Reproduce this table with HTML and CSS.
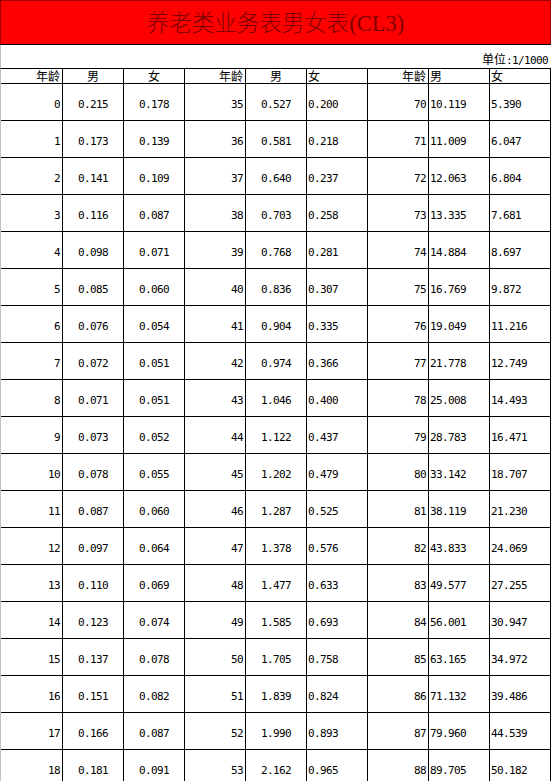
FILE: index.html
```html
<!DOCTYPE html>
<html lang="zh-CN">
<head>
<meta charset="utf-8">
<title>养老类业务表男女表(CL3)</title>
<link rel="stylesheet" href="styles.css">
</head>
<body>
<div class="sheet">
  <h1 class="title">养老类业务表男女表(CL3)</h1>
  <div class="unit">单位<span class="num">:1/1000</span></div>
  <div class="grid">
    <div class="c h">年龄</div><div class="c h">男</div><div class="c h">女</div><div class="c h">年龄</div><div class="c h">男</div><div class="c h">女</div><div class="c h">年龄</div><div class="c h">男</div><div class="c h">女</div>
    <div class="c">0</div><div class="c">0.215</div><div class="c">0.178</div><div class="c">35</div><div class="c">0.527</div><div class="c">0.200</div><div class="c">70</div><div class="c">10.119</div><div class="c">5.390</div>
    <div class="c">1</div><div class="c">0.173</div><div class="c">0.139</div><div class="c">36</div><div class="c">0.581</div><div class="c">0.218</div><div class="c">71</div><div class="c">11.009</div><div class="c">6.047</div>
    <div class="c">2</div><div class="c">0.141</div><div class="c">0.109</div><div class="c">37</div><div class="c">0.640</div><div class="c">0.237</div><div class="c">72</div><div class="c">12.063</div><div class="c">6.804</div>
    <div class="c">3</div><div class="c">0.116</div><div class="c">0.087</div><div class="c">38</div><div class="c">0.703</div><div class="c">0.258</div><div class="c">73</div><div class="c">13.335</div><div class="c">7.681</div>
    <div class="c">4</div><div class="c">0.098</div><div class="c">0.071</div><div class="c">39</div><div class="c">0.768</div><div class="c">0.281</div><div class="c">74</div><div class="c">14.884</div><div class="c">8.697</div>
    <div class="c">5</div><div class="c">0.085</div><div class="c">0.060</div><div class="c">40</div><div class="c">0.836</div><div class="c">0.307</div><div class="c">75</div><div class="c">16.769</div><div class="c">9.872</div>
    <div class="c">6</div><div class="c">0.076</div><div class="c">0.054</div><div class="c">41</div><div class="c">0.904</div><div class="c">0.335</div><div class="c">76</div><div class="c">19.049</div><div class="c">11.216</div>
    <div class="c">7</div><div class="c">0.072</div><div class="c">0.051</div><div class="c">42</div><div class="c">0.974</div><div class="c">0.366</div><div class="c">77</div><div class="c">21.778</div><div class="c">12.749</div>
    <div class="c">8</div><div class="c">0.071</div><div class="c">0.051</div><div class="c">43</div><div class="c">1.046</div><div class="c">0.400</div><div class="c">78</div><div class="c">25.008</div><div class="c">14.493</div>
    <div class="c">9</div><div class="c">0.073</div><div class="c">0.052</div><div class="c">44</div><div class="c">1.122</div><div class="c">0.437</div><div class="c">79</div><div class="c">28.783</div><div class="c">16.471</div>
    <div class="c">10</div><div class="c">0.078</div><div class="c">0.055</div><div class="c">45</div><div class="c">1.202</div><div class="c">0.479</div><div class="c">80</div><div class="c">33.142</div><div class="c">18.707</div>
    <div class="c">11</div><div class="c">0.087</div><div class="c">0.060</div><div class="c">46</div><div class="c">1.287</div><div class="c">0.525</div><div class="c">81</div><div class="c">38.119</div><div class="c">21.230</div>
    <div class="c">12</div><div class="c">0.097</div><div class="c">0.064</div><div class="c">47</div><div class="c">1.378</div><div class="c">0.576</div><div class="c">82</div><div class="c">43.833</div><div class="c">24.069</div>
    <div class="c">13</div><div class="c">0.110</div><div class="c">0.069</div><div class="c">48</div><div class="c">1.477</div><div class="c">0.633</div><div class="c">83</div><div class="c">49.577</div><div class="c">27.255</div>
    <div class="c">14</div><div class="c">0.123</div><div class="c">0.074</div><div class="c">49</div><div class="c">1.585</div><div class="c">0.693</div><div class="c">84</div><div class="c">56.001</div><div class="c">30.947</div>
    <div class="c">15</div><div class="c">0.137</div><div class="c">0.078</div><div class="c">50</div><div class="c">1.705</div><div class="c">0.758</div><div class="c">85</div><div class="c">63.165</div><div class="c">34.972</div>
    <div class="c">16</div><div class="c">0.151</div><div class="c">0.082</div><div class="c">51</div><div class="c">1.839</div><div class="c">0.824</div><div class="c">86</div><div class="c">71.132</div><div class="c">39.486</div>
    <div class="c">17</div><div class="c">0.166</div><div class="c">0.087</div><div class="c">52</div><div class="c">1.990</div><div class="c">0.893</div><div class="c">87</div><div class="c">79.960</div><div class="c">44.539</div>
    <div class="c">18</div><div class="c">0.181</div><div class="c">0.091</div><div class="c">53</div><div class="c">2.162</div><div class="c">0.965</div><div class="c">88</div><div class="c">89.705</div><div class="c">50.182</div>
  </div>
</div>
</body>
</html>
```

FILE: styles.css
```css
html, body {
  margin: 0;
  padding: 0;
  background: #ffffff;
  overflow: hidden;
}

.sheet {
  width: 551px;
  color: #000;
  font-family: "Noto Sans CJK SC", sans-serif;
  font-size: 12px;
}

.title {
  box-sizing: border-box;
  margin: 0;
  height: 45px;
  padding-top: 3px;
  background: #ff0000;
  border-top: 1px solid #a00000;
  border-left: 1px solid #a00000;
  border-right: 1px solid #a00000;
  border-bottom: 1px solid #000;
  color: #800000;
  font-family: "Liberation Serif", "Noto Sans CJK SC", serif;
  font-weight: 300;
  font-size: 22.5px;
  line-height: 40px;
  text-align: center;
}

.unit {
  box-sizing: border-box;
  height: 24px;
  padding: 7px 3px 0 0;
  border-left: 1px solid #c0c0c0;
  border-bottom: 1px solid #000;
  line-height: 14px;
  text-align: right;
}

.num {
  font-family: "DejaVu Sans Mono", monospace;
  font-size: 11px;
  letter-spacing: -0.62px;
}

.grid {
  display: grid;
  grid-template-columns: 62px repeat(8, 61px);
  border-left: 1px solid #c0c0c0;
}

.c {
  box-sizing: border-box;
  height: 37px;
  padding-top: 4px;
  border-right: 1px solid #000;
  border-bottom: 1px solid #000;
  display: flex;
  align-items: center;
  font-family: "DejaVu Sans Mono", monospace;
  font-size: 11px;
  letter-spacing: -0.62px;
  white-space: nowrap;
}

.c.h {
  height: 15px;
  padding-top: 0;
  align-items: flex-end;
  font-family: "Noto Sans CJK SC", sans-serif;
  font-size: 12px;
  line-height: 14px;
  letter-spacing: 0;
}

.grid > .c:nth-child(9n+1),
.grid > .c:nth-child(9n+4),
.grid > .c:nth-child(9n+7) {
  justify-content: flex-end;
  padding-right: 2px;
}

.grid > .c:nth-child(9n+2),
.grid > .c:nth-child(9n+3),
.grid > .c:nth-child(9n+5) {
  justify-content: center;
}

.grid > .c:nth-child(9n+6),
.grid > .c:nth-child(9n+8),
.grid > .c:nth-child(9n+9) {
  justify-content: flex-start;
  padding-left: 1px;
}
```
